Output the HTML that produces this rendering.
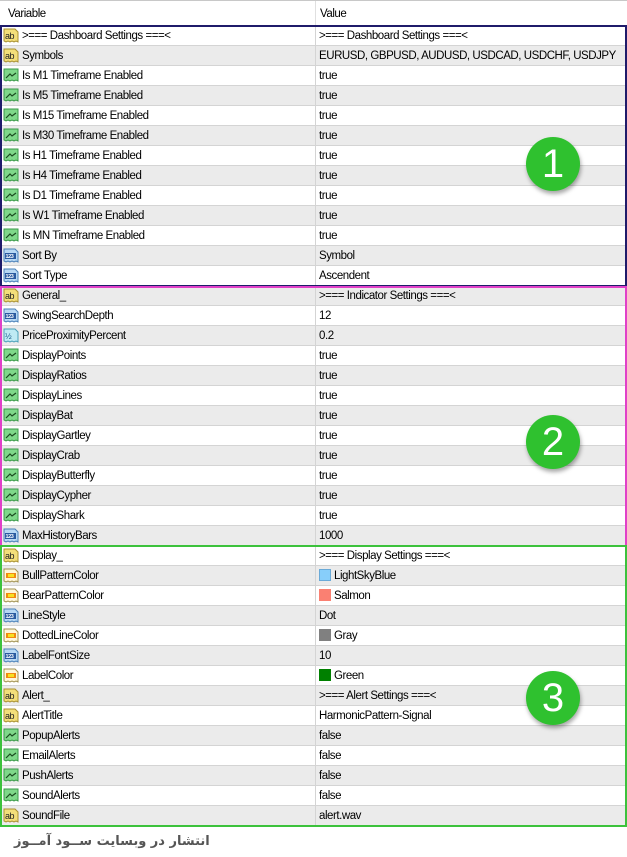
<!DOCTYPE html>
<html><head><meta charset="utf-8">
<style>
*{margin:0;padding:0;box-sizing:border-box}
body{width:627px;height:857px;background:#fff;font-family:"Liberation Sans",Arial,sans-serif;font-size:11.5px;color:#000;position:relative;overflow:hidden;letter-spacing:-0.45px}
.hdr{position:absolute;left:0;top:0;width:627px;height:26px;border-top:1px solid #c8c8c8;background:#fff}
.hdr span{position:absolute;top:3px;line-height:20px}
.hdr .d{position:absolute;left:315px;top:0;width:1px;height:26px;background:#e0e0e0}
.row{position:absolute;left:0;width:627px;height:20px;border-bottom:1px solid #d4d4d4}
.row.g{background:#ebebeb}
.row .n{position:absolute;left:22px;top:0;line-height:20px;white-space:nowrap}
.row .v{position:absolute;left:319px;top:0;line-height:20px;white-space:nowrap}
.row .d{position:absolute;left:315px;top:0;width:1px;height:20px;background:#d4d4d4}
.row svg{position:absolute;left:3px;top:2px}
.sw{display:inline-block;width:12px;height:12px;vertical-align:-2px;margin-right:3px}
.box{position:absolute;left:0;width:627px;border:2px solid}
.c{position:absolute;width:54px;height:54px;border-radius:50%;background:#2fc12f;color:#fff;font-size:40px;text-align:center;line-height:54px;box-shadow:1px 3px 4px rgba(0,0,0,.35);font-family:"Liberation Sans",sans-serif;letter-spacing:0}
.ft{position:absolute;left:14px;top:834px;font-size:13px;font-weight:bold;color:#555;font-family:"DejaVu Sans","Noto Sans CJK SC",sans-serif;direction:rtl;letter-spacing:0}
</style></head><body>
<svg width="0" height="0" style="position:absolute">
<defs>
<symbol id="ab" viewBox="0 0 16 16"><path d="M1 1h11l3 3v10l-2-1-2 1-2-1-2 1-2-1-2 1-2-1z" fill="#f3df7a" stroke="#a99030"/><text x="2" y="11" font-size="9" font-family="Liberation Sans" fill="#222">ab</text></symbol>
<symbol id="gr" viewBox="0 0 16 16"><path d="M1 1h14v12l-2-1-2 1-2-1-2 1-2-1-2 1-2-1z" fill="#7fd88a" stroke="#3a9a48"/><path d="M3 10l4-4 2 2 4-3" stroke="#1a4a20" fill="none" stroke-width="1.2"/></symbol>
<symbol id="nb" viewBox="0 0 16 16"><path d="M1 1h11l3 3v10l-2-1-2 1-2-1-2 1-2-1-2 1-2-1z" fill="#b8d8f4" stroke="#4a80b8"/><rect x="2" y="5" width="11" height="6" fill="#2a5aa0"/><text x="2.5" y="10" font-size="5.5" font-family="Liberation Sans" fill="#fff" font-weight="bold">123</text></symbol>
<symbol id="hf" viewBox="0 0 16 16"><path d="M1 1h11l3 3v10l-2-1-2 1-2-1-2 1-2-1-2 1-2-1z" fill="#bfeaf4" stroke="#4aa0b8"/><text x="2" y="11" font-size="8" font-family="Liberation Sans" fill="#1a5a8a">½</text></symbol>
<symbol id="co" viewBox="0 0 16 16"><path d="M1 1h11l3 3v10l-2-1-2 1-2-1-2 1-2-1-2 1-2-1z" fill="#fff7d8" stroke="#a09050"/><rect x="3" y="5" width="10" height="5" fill="#f08a10"/><rect x="5" y="6" width="6" height="3" fill="#f8e020"/></symbol>
</defs></svg>

<div class="hdr"><span style="left:8px">Variable</span><span style="left:320px">Value</span><div class="d"></div></div>

<div class="row" style="top:26px"><svg width="16" height="16"><use href="#ab"/></svg><span class="n">&gt;=== Dashboard Settings ===&lt;</span><div class="d"></div><span class="v">&gt;=== Dashboard Settings ===&lt;</span></div>
<div class="row g" style="top:46px"><svg width="16" height="16"><use href="#ab"/></svg><span class="n">Symbols</span><div class="d"></div><span class="v">EURUSD, GBPUSD, AUDUSD, USDCAD, USDCHF, USDJPY</span></div>
<div class="row" style="top:66px"><svg width="16" height="16"><use href="#gr"/></svg><span class="n">Is M1 Timeframe Enabled</span><div class="d"></div><span class="v">true</span></div>
<div class="row g" style="top:86px"><svg width="16" height="16"><use href="#gr"/></svg><span class="n">Is M5 Timeframe Enabled</span><div class="d"></div><span class="v">true</span></div>
<div class="row" style="top:106px"><svg width="16" height="16"><use href="#gr"/></svg><span class="n">Is M15 Timeframe Enabled</span><div class="d"></div><span class="v">true</span></div>
<div class="row g" style="top:126px"><svg width="16" height="16"><use href="#gr"/></svg><span class="n">Is M30 Timeframe Enabled</span><div class="d"></div><span class="v">true</span></div>
<div class="row" style="top:146px"><svg width="16" height="16"><use href="#gr"/></svg><span class="n">Is H1 Timeframe Enabled</span><div class="d"></div><span class="v">true</span></div>
<div class="row g" style="top:166px"><svg width="16" height="16"><use href="#gr"/></svg><span class="n">Is H4 Timeframe Enabled</span><div class="d"></div><span class="v">true</span></div>
<div class="row" style="top:186px"><svg width="16" height="16"><use href="#gr"/></svg><span class="n">Is D1 Timeframe Enabled</span><div class="d"></div><span class="v">true</span></div>
<div class="row g" style="top:206px"><svg width="16" height="16"><use href="#gr"/></svg><span class="n">Is W1 Timeframe Enabled</span><div class="d"></div><span class="v">true</span></div>
<div class="row" style="top:226px"><svg width="16" height="16"><use href="#gr"/></svg><span class="n">Is MN Timeframe Enabled</span><div class="d"></div><span class="v">true</span></div>
<div class="row g" style="top:246px"><svg width="16" height="16"><use href="#nb"/></svg><span class="n">Sort By</span><div class="d"></div><span class="v">Symbol</span></div>
<div class="row" style="top:266px"><svg width="16" height="16"><use href="#nb"/></svg><span class="n">Sort Type</span><div class="d"></div><span class="v">Ascendent</span></div>

<div class="row g" style="top:286px"><svg width="16" height="16"><use href="#ab"/></svg><span class="n">General_</span><div class="d"></div><span class="v">&gt;=== Indicator Settings ===&lt;</span></div>
<div class="row" style="top:306px"><svg width="16" height="16"><use href="#nb"/></svg><span class="n">SwingSearchDepth</span><div class="d"></div><span class="v">12</span></div>
<div class="row g" style="top:326px"><svg width="16" height="16"><use href="#hf"/></svg><span class="n">PriceProximityPercent</span><div class="d"></div><span class="v">0.2</span></div>
<div class="row" style="top:346px"><svg width="16" height="16"><use href="#gr"/></svg><span class="n">DisplayPoints</span><div class="d"></div><span class="v">true</span></div>
<div class="row g" style="top:366px"><svg width="16" height="16"><use href="#gr"/></svg><span class="n">DisplayRatios</span><div class="d"></div><span class="v">true</span></div>
<div class="row" style="top:386px"><svg width="16" height="16"><use href="#gr"/></svg><span class="n">DisplayLines</span><div class="d"></div><span class="v">true</span></div>
<div class="row g" style="top:406px"><svg width="16" height="16"><use href="#gr"/></svg><span class="n">DisplayBat</span><div class="d"></div><span class="v">true</span></div>
<div class="row" style="top:426px"><svg width="16" height="16"><use href="#gr"/></svg><span class="n">DisplayGartley</span><div class="d"></div><span class="v">true</span></div>
<div class="row g" style="top:446px"><svg width="16" height="16"><use href="#gr"/></svg><span class="n">DisplayCrab</span><div class="d"></div><span class="v">true</span></div>
<div class="row" style="top:466px"><svg width="16" height="16"><use href="#gr"/></svg><span class="n">DisplayButterfly</span><div class="d"></div><span class="v">true</span></div>
<div class="row g" style="top:486px"><svg width="16" height="16"><use href="#gr"/></svg><span class="n">DisplayCypher</span><div class="d"></div><span class="v">true</span></div>
<div class="row" style="top:506px"><svg width="16" height="16"><use href="#gr"/></svg><span class="n">DisplayShark</span><div class="d"></div><span class="v">true</span></div>
<div class="row g" style="top:526px"><svg width="16" height="16"><use href="#nb"/></svg><span class="n">MaxHistoryBars</span><div class="d"></div><span class="v">1000</span></div>

<div class="row" style="top:546px"><svg width="16" height="16"><use href="#ab"/></svg><span class="n">Display_</span><div class="d"></div><span class="v">&gt;=== Display Settings ===&lt;</span></div>
<div class="row g" style="top:566px"><svg width="16" height="16"><use href="#co"/></svg><span class="n">BullPatternColor</span><div class="d"></div><span class="v"><span class="sw" style="background:#87cefa;border:1px solid #6aaad8"></span>LightSkyBlue</span></div>
<div class="row" style="top:586px"><svg width="16" height="16"><use href="#co"/></svg><span class="n">BearPatternColor</span><div class="d"></div><span class="v"><span class="sw" style="background:#fa8072"></span>Salmon</span></div>
<div class="row g" style="top:606px"><svg width="16" height="16"><use href="#nb"/></svg><span class="n">LineStyle</span><div class="d"></div><span class="v">Dot</span></div>
<div class="row" style="top:626px"><svg width="16" height="16"><use href="#co"/></svg><span class="n">DottedLineColor</span><div class="d"></div><span class="v"><span class="sw" style="background:#808080"></span>Gray</span></div>
<div class="row g" style="top:646px"><svg width="16" height="16"><use href="#nb"/></svg><span class="n">LabelFontSize</span><div class="d"></div><span class="v">10</span></div>
<div class="row" style="top:666px"><svg width="16" height="16"><use href="#co"/></svg><span class="n">LabelColor</span><div class="d"></div><span class="v"><span class="sw" style="background:#008000"></span>Green</span></div>
<div class="row g" style="top:686px"><svg width="16" height="16"><use href="#ab"/></svg><span class="n">Alert_</span><div class="d"></div><span class="v">&gt;=== Alert Settings ===&lt;</span></div>
<div class="row" style="top:706px"><svg width="16" height="16"><use href="#ab"/></svg><span class="n">AlertTitle</span><div class="d"></div><span class="v">HarmonicPattern-Signal</span></div>
<div class="row g" style="top:726px"><svg width="16" height="16"><use href="#gr"/></svg><span class="n">PopupAlerts</span><div class="d"></div><span class="v">false</span></div>
<div class="row" style="top:746px"><svg width="16" height="16"><use href="#gr"/></svg><span class="n">EmailAlerts</span><div class="d"></div><span class="v">false</span></div>
<div class="row g" style="top:766px"><svg width="16" height="16"><use href="#gr"/></svg><span class="n">PushAlerts</span><div class="d"></div><span class="v">false</span></div>
<div class="row" style="top:786px"><svg width="16" height="16"><use href="#gr"/></svg><span class="n">SoundAlerts</span><div class="d"></div><span class="v">false</span></div>
<div class="row g" style="top:806px"><svg width="16" height="16"><use href="#ab"/></svg><span class="n">SoundFile</span><div class="d"></div><span class="v">alert.wav</span></div>

<div class="box" style="top:25px;height:262px;border-color:#1f1b6a"></div>
<div class="box" style="top:286px;height:261px;border-color:#e040c8"></div>
<div class="box" style="top:545px;height:282px;border-color:#3cc23c"></div>

<div class="c" style="left:526px;top:137px">1</div>
<div class="c" style="left:526px;top:415px">2</div>
<div class="c" style="left:526px;top:671px">3</div>

<div class="ft">انتشار در وبسایت ســود آمــوز</div>
</body></html>
